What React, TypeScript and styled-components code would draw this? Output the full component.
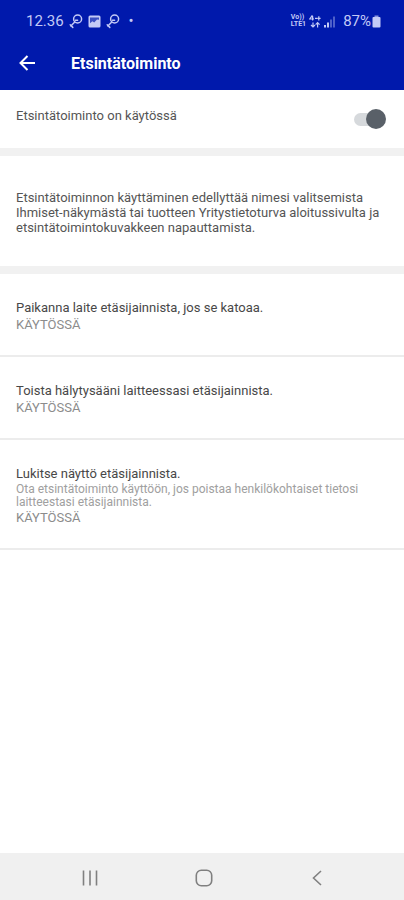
import React, { useState } from 'react';
import styled, { createGlobalStyle } from 'styled-components';

const GlobalStyle = createGlobalStyle`
  *, *::before, *::after { box-sizing: border-box; }
  body {
    margin: 0;
    background: #ffffff;
    font-family: Roboto, "Liberation Sans", sans-serif;
  }
`;

const Screen = styled.div`
  display: flex;
  flex-direction: column;
  min-height: 100vh;
  background: #ffffff;
`;

const Header = styled.header`
  background: #0019ac;
  color: #ffffff;
`;

const StatusBar = styled.div`
  display: flex;
  align-items: center;
  justify-content: space-between;
  height: 36px;
  padding: 6px 23px 0 26px;
  color: #c3caf6;
  font-size: 15px;
  line-height: 20px;
`;

const StatusGroup = styled.div<{ $gap: number }>`
  display: flex;
  align-items: center;
  gap: ${({ $gap }) => $gap}px;
`;

const BatteryLevel = styled.span`
  display: flex;
  align-items: center;
  gap: 1px;
  margin-left: 4px;
`;

const NetworkLabel = styled.span`
  display: flex;
  flex-direction: column;
  font-size: 7px;
  font-weight: 700;
  line-height: 7px;
`;

const AppBar = styled.div`
  display: flex;
  align-items: center;
  gap: 32px;
  height: 54px;
  padding: 0 16px;
`;

const IconButton = styled.button`
  display: flex;
  align-items: center;
  justify-content: center;
  padding: 0;
  border: 0;
  background: none;
  color: inherit;
  cursor: pointer;
`;

const Title = styled.h1`
  margin: 0;
  padding-top: 1px;
  font-size: 16px;
  font-weight: 700;
  line-height: 21px;
`;

const Content = styled.main`
  flex: 1;
`;

const ToggleRow = styled.label`
  display: flex;
  align-items: flex-start;
  justify-content: space-between;
  padding: 18px 18px 18px 16px;
  color: #555555;
  font-size: 13px;
  line-height: 15px;
  cursor: pointer;
`;

const Switch = styled.input`
  appearance: none;
  position: relative;
  width: 32px;
  height: 22px;
  margin: 0;
  cursor: pointer;

  &::before {
    content: '';
    position: absolute;
    inset: 5px 2px 4px 0;
    border-radius: 7px;
    background: #d6d9dc;
  }

  &::after {
    content: '';
    position: absolute;
    top: 1px;
    left: 0;
    width: 20px;
    height: 20px;
    border-radius: 50%;
    background: #9da3a9;
  }

  &:checked::after {
    left: 12px;
    background: #596068;
  }
`;

const Band = styled.div`
  height: 8px;
  background: #f1f1f1;
`;

const Description = styled.p`
  margin: 0;
  padding: 34px 16px 31px;
  color: #555555;
  font-size: 13px;
  line-height: 15px;
`;

const FeatureList = styled.ul`
  margin: 0;
  padding: 0;
  list-style: none;
`;

const FeatureItem = styled.li`
  padding: 25px 16px 22px;
  border-bottom: 2px solid #ececec;
`;

const FeatureName = styled.h2`
  margin: 0;
  color: #484848;
  font-size: 13px;
  font-weight: 400;
  line-height: 17px;
`;

const FeatureNote = styled.p`
  margin: 0;
  padding-top: 1px;
  color: #a0a0a0;
  font-size: 12px;
  line-height: 13px;
`;

const FeatureState = styled.p`
  margin: 0;
  color: #8c8c8c;
  font-size: 13px;
  line-height: 17px;
`;

const NavBar = styled.nav`
  display: flex;
  align-items: center;
  justify-content: space-between;
  height: 47px;
  padding: 2px 73px 0 76px;
  background: #f0f0f0;
  color: #808080;
`;

const KeyIcon = () => (
  <svg width="14" height="15" viewBox="0 0 14 15" fill="none" stroke="currentColor" strokeWidth="1.5" strokeLinecap="round" aria-hidden="true">
    <circle cx="8.6" cy="5" r="4" />
    <path d="M5.8 8 1.8 12M1.2 10.8l2.6 2.6M6.4 6.2h2.2" />
  </svg>
);

const PictureIcon = () => (
  <svg width="13" height="13" viewBox="0 0 13 13" aria-hidden="true">
    <rect x="0.5" y="0.5" width="12" height="12" rx="1.5" fill="#c3caf6" />
    <path d="M2 2.4h9v2.4L9 4.4 6.2 7.6 4.4 6.2 2 8.2z" fill="#0019ac" opacity="0.7" />
  </svg>
);

const ArrowsIcon = () => (
  <svg width="12" height="13" viewBox="0 0 12 13" fill="none" stroke="currentColor" strokeWidth="1.2" aria-hidden="true">
    <path d="M3 .8.8 4h3.4zM3.6 1v4.6M6 3.4h2M9.8 1.2v4.4M8.2 3.4h3.4" />
    <path d="M4 12V7.4M2 10l2 2 2-2M8.6 12.4V7.6M6.6 9.6l2-2 2 2" />
  </svg>
);

const SignalIcon = () => (
  <svg width="12" height="13" viewBox="0 0 12 13" fill="currentColor" aria-hidden="true">
    <rect x="0" y="10" width="2" height="2.5" />
    <rect x="3" y="7.5" width="2" height="5" />
    <rect x="6" y="4.5" width="2" height="8" opacity="0.4" />
    <rect x="9" y="1.5" width="2" height="11" opacity="0.4" />
  </svg>
);

const BatteryIcon = () => (
  <svg width="9" height="13" viewBox="0 0 9 13" fill="currentColor" aria-hidden="true">
    <rect x="2.5" y="0.5" width="4" height="2" opacity="0.7" />
    <rect x="0.5" y="2" width="8" height="10.5" rx="1" />
  </svg>
);

const ArrowLeftIcon = () => (
  <svg width="23" height="20" viewBox="0 0 23 20" fill="none" stroke="currentColor" strokeWidth="2" aria-hidden="true">
    <path d="M19 10H5M11.5 3 4.5 10l7 7" />
  </svg>
);

const RecentsIcon = () => (
  <svg width="28" height="20" viewBox="0 0 28 20" stroke="currentColor" strokeWidth="1.6" aria-hidden="true">
    <path d="M7.5 2.5v15M14 2.5v15M20.5 2.5v15" />
  </svg>
);

const HomeIcon = () => (
  <svg width="28" height="20" viewBox="0 0 28 20" fill="none" stroke="currentColor" strokeWidth="1.6" aria-hidden="true">
    <rect x="6.3" y="2.3" width="15.4" height="15.4" rx="5" />
  </svg>
);

const BackIcon = () => (
  <svg width="28" height="20" viewBox="0 0 28 20" fill="none" stroke="currentColor" strokeWidth="1.6" aria-hidden="true">
    <path d="M18 3 10.5 10l7.5 7" />
  </svg>
);

interface Feature {
  name: string;
  note?: string;
}

const features: Feature[] = [
  { name: 'Paikanna laite etäsijainnista, jos se katoaa.' },
  { name: 'Toista hälytysääni laitteessasi etäsijainnista.' },
  {
    name: 'Lukitse näyttö etäsijainnista.',
    note: 'Ota etsintätoiminto käyttöön, jos poistaa henkilökohtaiset tietosi laitteestasi etäsijainnista.',
  },
];

export default function App() {
  const [enabled, setEnabled] = useState(true);

  return (
    <Screen>
      <GlobalStyle />
      <Header>
        <StatusBar>
          <StatusGroup $gap={5}>
            <span>12.36</span>
            <KeyIcon />
            <PictureIcon />
            <KeyIcon />
            <span>&nbsp;•</span>
          </StatusGroup>
          <StatusGroup $gap={3}>
            <NetworkLabel>
              <span>Vo))</span>
              <span>LTE1</span>
            </NetworkLabel>
            <ArrowsIcon />
            <SignalIcon />
            <BatteryLevel>
              87%
              <BatteryIcon />
            </BatteryLevel>
          </StatusGroup>
        </StatusBar>
        <AppBar>
          <IconButton type="button" aria-label="Takaisin">
            <ArrowLeftIcon />
          </IconButton>
          <Title>Etsintätoiminto</Title>
        </AppBar>
      </Header>
      <Content>
        <ToggleRow htmlFor="finder">
          Etsintätoiminto on käytössä
          <Switch
            id="finder"
            type="checkbox"
            role="switch"
            checked={enabled}
            onChange={(event) => setEnabled(event.target.checked)}
          />
        </ToggleRow>
        <Band />
        <Description>
          Etsintätoiminnon käyttäminen edellyttää nimesi valitsemista Ihmiset-näkymästä tai tuotteen
          Yritystietoturva aloitussivulta ja etsintätoimintokuvakkeen napauttamista.
        </Description>
        <Band />
        <FeatureList>
          {features.map(({ name, note }) => (
            <FeatureItem key={name}>
              <FeatureName>{name}</FeatureName>
              {note && <FeatureNote>{note}</FeatureNote>}
              <FeatureState>KÄYTÖSSÄ</FeatureState>
            </FeatureItem>
          ))}
        </FeatureList>
      </Content>
      <NavBar>
        <IconButton type="button" aria-label="Viimeisimmät">
          <RecentsIcon />
        </IconButton>
        <IconButton type="button" aria-label="Aloitusnäyttö">
          <HomeIcon />
        </IconButton>
        <IconButton type="button" aria-label="Edellinen">
          <BackIcon />
        </IconButton>
      </NavBar>
    </Screen>
  );
}
